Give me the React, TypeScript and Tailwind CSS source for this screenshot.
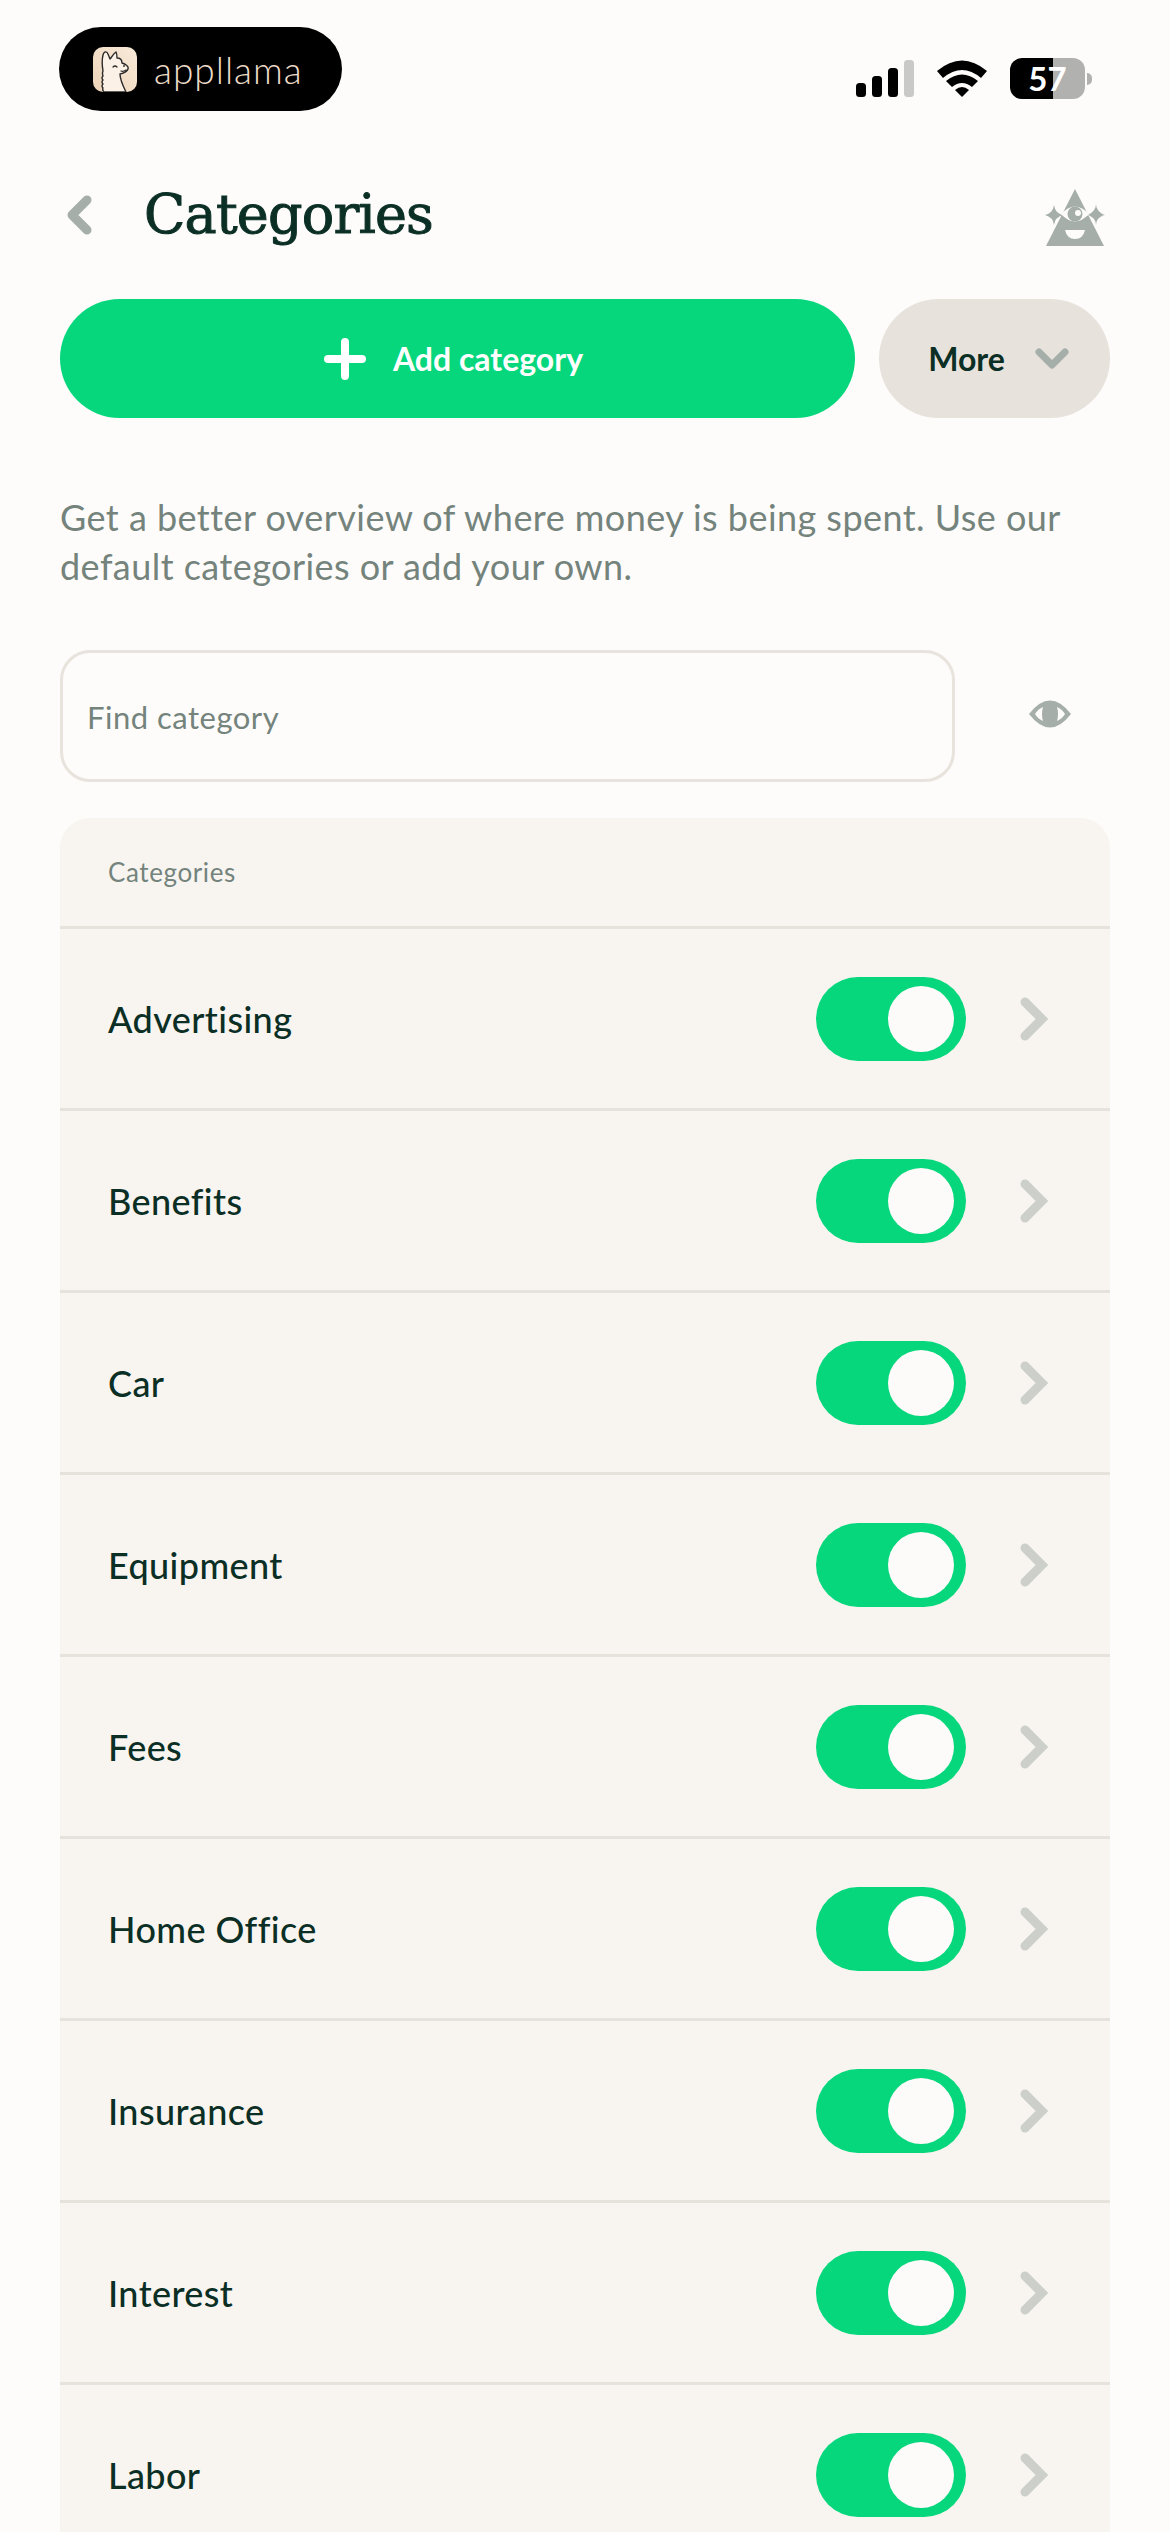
const categories = [
  'Advertising',
  'Benefits',
  'Car',
  'Equipment',
  'Fees',
  'Home Office',
  'Insurance',
  'Interest',
  'Labor',
];

function LlamaIcon() {
  return (
    <svg viewBox="0 0 44 45" className="h-[45px] w-[44px] shrink-0">
      <defs>
        <linearGradient id="llamaBg" x1="1" y1="0" x2="0" y2="1">
          <stop offset="0" stopColor="#f8ead9" />
          <stop offset="1" stopColor="#edd3b8" />
        </linearGradient>
      </defs>
      <rect width="44" height="45" rx="10" fill="url(#llamaBg)" />
      <path
        d="M11 45 q-2 -2 -1 -4 q-2 -2 0 -4 q-2 -2 0 -4 q-2 -2 0 -4 q-1 -3 0 -5 C9 18 9 12 10 8 C11 4 14 4 15 7 L17 12 C19 10 20 7 23 5 C24 7 24 9 24 11 C27 11 29 13 29 16 C32 17 36 19 35 22 C34 25 31 26 27 27 C27 33 30 39 33 45 Z"
        fill="#fbf1e6"
        stroke="#2a2a2a"
        strokeWidth="1.4"
        strokeLinejoin="round"
      />
      <path d="M20 20 q2 -2 4 0 M33 23 q-3 2 -5 1" fill="none" stroke="#2a2a2a" strokeWidth="1.2" strokeLinecap="round" />
      <circle cx="31" cy="19" r="0.9" fill="#2a2a2a" />
    </svg>
  );
}

function BackChevron() {
  return (
    <svg viewBox="0 0 26 40" className="h-[40px] w-[26px]">
      <path d="M21 5 L6 20 L21 35" fill="none" stroke="#a5aea8" strokeWidth="9" strokeLinecap="round" strokeLinejoin="round" />
    </svg>
  );
}

function WizardIcon() {
  return (
    <svg viewBox="0 0 60 58" className="h-[58px] w-[60px]">
      <path d="M30 0 L59 57 L1 57 Z" fill="#a5aea8" />
      <path d="M9 16 Q10 24 18 26 Q10 28 9 36 Q8 28 0 26 Q8 24 9 16 Z" fill="#a5aea8" />
      <path d="M51 15 Q52 23 60 26 Q52 28 51 36 Q50 28 42 26 Q50 23 51 15 Z" fill="#a5aea8" stroke="#fdfcfa" strokeWidth="0.5" />
      <path d="M16 25 Q30 10 44 25 Q30 40 16 25 Z" fill="#fdfcfa" />
      <circle cx="30" cy="25" r="7.5" fill="#a5aea8" />
      <circle cx="33" cy="24" r="3" fill="#fdfcfa" />
      <path d="M20 41 H40 Q38 50 30 50 Q22 50 20 41 Z" fill="#fdfcfa" />
    </svg>
  );
}

function Toggle() {
  return (
    <div className="flex h-[84px] w-[150px] items-center justify-end rounded-full bg-[#06d77d] pr-[12px]">
      <div className="h-[66px] w-[66px] rounded-full bg-[#fdfbf9]" />
    </div>
  );
}

function RowChevron() {
  return (
    <svg viewBox="0 0 28 44" className="h-[44px] w-[28px]">
      <path d="M5 5 L22 22 L5 39" fill="none" stroke="#cdd0ca" strokeWidth="9" strokeLinecap="round" strokeLinejoin="miter" />
    </svg>
  );
}

export default function App() {
  return (
    <div className="h-[2532px] w-[1170px] overflow-hidden bg-[#fdfcfa] font-['Lato',sans-serif] text-[#0b2f25]">
      {/* Status bar */}
      <div className="flex h-[160px] items-start justify-between pl-[59px] pr-[78px] pt-[27px]">
        <div className="flex h-[84px] w-[283px] items-center rounded-full bg-black pl-[34px]">
          <LlamaIcon />
          <span className="ml-[17px] text-[37px] font-light leading-none tracking-[1px] text-[#eedcc9]">appllama</span>
        </div>
        <div className="flex items-center pt-[31px]">
          <svg viewBox="0 0 58 38" className="h-[38px] w-[58px]">
            <rect x="0" y="23" width="10" height="14" rx="3.5" fill="#000" />
            <rect x="16" y="16" width="10" height="21" rx="3.5" fill="#000" />
            <rect x="32" y="8" width="10" height="29" rx="3.5" fill="#000" />
            <rect x="48" y="0" width="10" height="37" rx="3.5" fill="#c9c9c7" />
          </svg>
          <svg viewBox="0 0 52 38" className="ml-[22px] h-[38px] w-[52px]">
            <path d="M1 11 Q26 -10 51 11 L45 18 Q26 2 7 18 Z" fill="#000" />
            <path d="M10 21 Q26 8 42 21 L36 27 Q26 19 16 27 Z" fill="#000" />
            <path d="M19 30 Q26 24 33 30 L26 37 Z" fill="#000" />
          </svg>
          <div className="ml-[22px] flex items-center">
            <div className="flex h-[41px] w-[75px] items-center justify-center rounded-[12px] bg-[linear-gradient(90deg,#000_0,#000_57%,#b1b1af_57%,#b1b1af_100%)] text-[33px] font-bold leading-none text-white">
              57
            </div>
            <div className="ml-[2px] h-[12px] w-[5px] rounded-r-full bg-[#b1b1af]" />
          </div>
        </div>
      </div>

      {/* Title */}
      <div className="mb-[29px] flex h-[110px] items-center justify-between pl-[66px] pr-[65px]">
        <div className="flex items-center">
          <BackChevron />
          <h1 className="ml-[52px] font-['DejaVu_Serif',serif] text-[54px] leading-none tracking-[-0.8px] text-[#0b2f25] [-webkit-text-stroke:1px_#0b2f25]">
            Categories
          </h1>
        </div>
        <div className="pt-[6px]">
          <WizardIcon />
        </div>
      </div>

      {/* Actions */}
      <div className="flex gap-[24px] px-[60px]">
        <div className="flex h-[119px] w-[795px] items-center justify-center rounded-full bg-[#06d77d] text-[32px] font-bold text-white">
          <svg viewBox="0 0 42 42" className="mr-[27px] h-[42px] w-[42px]">
            <path d="M21 4 V38 M4 21 H38" stroke="#fff" strokeWidth="8" strokeLinecap="round" />
          </svg>
          <span className="mr-[8px]">Add category</span>
        </div>
        <div className="flex h-[119px] w-[231px] items-center justify-center rounded-full bg-[#e7e2dc] text-[32px] font-bold">
          <span className="ml-[8px]">More</span>
          <svg viewBox="0 0 34 22" className="ml-[30px] h-[22px] w-[34px]">
            <path d="M4 4 L17 17 L30 4" fill="none" stroke="#a5aea8" strokeWidth="7" strokeLinecap="round" strokeLinejoin="round" />
          </svg>
        </div>
      </div>

      <p className="mx-[60px] mt-[75px] text-[36px] leading-[49px] tracking-[0.45px] text-[#74837c]">
        Get a better overview of where money is being spent. Use our default categories or add your own.
      </p>

      {/* Search */}
      <div className="mt-[59px] flex items-center pl-[60px]">
        <div className="flex h-[132px] w-[895px] items-center rounded-[30px] border-[3px] border-[#e8e3dd] pl-[24px] pt-[2px] text-[31px] tracking-[0.5px] text-[#74837c]">
          Find category
        </div>
        <svg viewBox="0 0 44 28" className="mb-[4px] ml-[73px] h-[28px] w-[44px]">
          <path d="M1 14 Q22 -13 43 14 Q22 41 1 14 Z" fill="#a5aea8" />
          <path d="M7 14 Q10 9 15 7 Q13 14 15 21 Q10 19 7 14 Z M37 14 Q34 9 29 7 Q31 14 29 21 Q34 19 37 14 Z" fill="#fdfcfa" />
        </svg>
      </div>

      {/* List */}
      <div className="mx-[60px] mt-[36px] rounded-t-[30px] bg-[#f8f5f1]">
        <div className="flex h-[111px] items-center border-b-[3px] border-[#e6e3dd] pl-[48px] text-[26px] tracking-[0.6px] text-[#74837c]">
          Categories
        </div>
        {categories.map((name) => (
          <div key={name} className="flex h-[182px] items-center border-b-[3px] border-[#e6e3dd] pl-[48px] pr-[62px]">
            <span className="flex-1 text-[36px] font-medium tracking-[0.4px]">{name}</span>
            <Toggle />
            <div className="ml-[54px] flex">
              <RowChevron />
            </div>
          </div>
        ))}
      </div>
    </div>
  );
}
